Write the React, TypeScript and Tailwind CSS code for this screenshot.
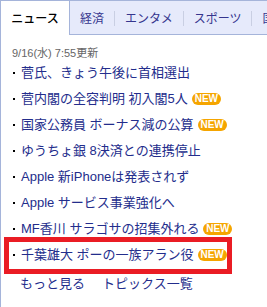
import React from "react";

const items: { text: string; isNew?: boolean; boxed?: boolean }[] = [
  { text: "菅氏、きょう午後に首相選出" },
  { text: "菅内閣の全容判明 初入閣5人", isNew: true },
  { text: "国家公務員 ボーナス減の公算", isNew: true },
  { text: "ゆうちょ銀 8決済との連携停止" },
  { text: "Apple 新iPhoneは発表されず" },
  { text: "Apple サービス事業強化へ" },
  { text: "MF香川 サラゴサの招集外れる", isNew: true },
  { text: "千葉雄大 ポーの一族アラン役", isNew: true, boxed: true },
];

function NewBadge() {
  return (
    <span className="ml-[4px] inline-flex h-[12px] w-[29px] items-center justify-center rounded-full bg-[#f5a500] text-[10px] font-bold leading-none text-white" style={{ fontFamily: '"Liberation Sans", Arial, sans-serif' }}>
      NEW
    </span>
  );
}

export default function App() {
  const font = '"Liberation Sans", "Noto Sans CJK JP", sans-serif';
  return (
    <div className="h-[307px] w-[267px] overflow-hidden bg-white" style={{ fontFamily: font }}>
      <div className="h-full border-l border-[#a5b4da]">
        <div className="flex h-[35px] border-t border-[#a5b4da]">
          <div className="flex w-[69px] shrink-0 items-center justify-center border-r border-[#a5b4da] bg-white pt-[2px] text-[12px] font-medium text-black">
            ニュース
          </div>
          <div className="flex flex-1 items-center border-b border-[#a5b4da] bg-[#e6eafb] pt-[2px] text-[12px] text-[#35358e]">
            <span className="whitespace-nowrap px-[10px]">経済</span>
            <span className="h-[15px] w-px bg-[#c9cfe3]" />
            <span className="whitespace-nowrap px-[10px]">エンタメ</span>
            <span className="h-[15px] w-px bg-[#c9cfe3]" />
            <span className="whitespace-nowrap px-[10px]">スポーツ</span>
            <span className="h-[15px] w-px bg-[#c9cfe3]" />
            <span className="whitespace-nowrap px-[10px]">国内</span>
          </div>
        </div>
        <div className="flex h-[24px] items-end pl-[11px] text-[11px] leading-none text-[#666]">
          9/16(水) 7:55更新
        </div>
        <ul className="mt-[1px]">
          {items.map((it, i) => (
            <li key={i} className="relative flex h-[26px] items-center text-[13px] text-[#232d8c]">
              <span className="ml-[12px] mr-[6px] h-[2px] w-[2px] bg-black" />
              <span className="whitespace-nowrap">{it.text}</span>
              {it.isNew && <NewBadge />}
              {it.boxed && (
                <span className="pointer-events-none absolute left-[3px] top-[-5px] h-[37px] w-[228px] border-[5px] border-[#ea1c24]" />
              )}
            </li>
          ))}
        </ul>
        <div className="mt-[6px] flex h-[20px] items-center gap-[17px] pl-[19px] text-[13px] text-[#232d8c]">
          <span>もっと見る</span>
          <span>トピックス一覧</span>
        </div>
      </div>
    </div>
  );
}
